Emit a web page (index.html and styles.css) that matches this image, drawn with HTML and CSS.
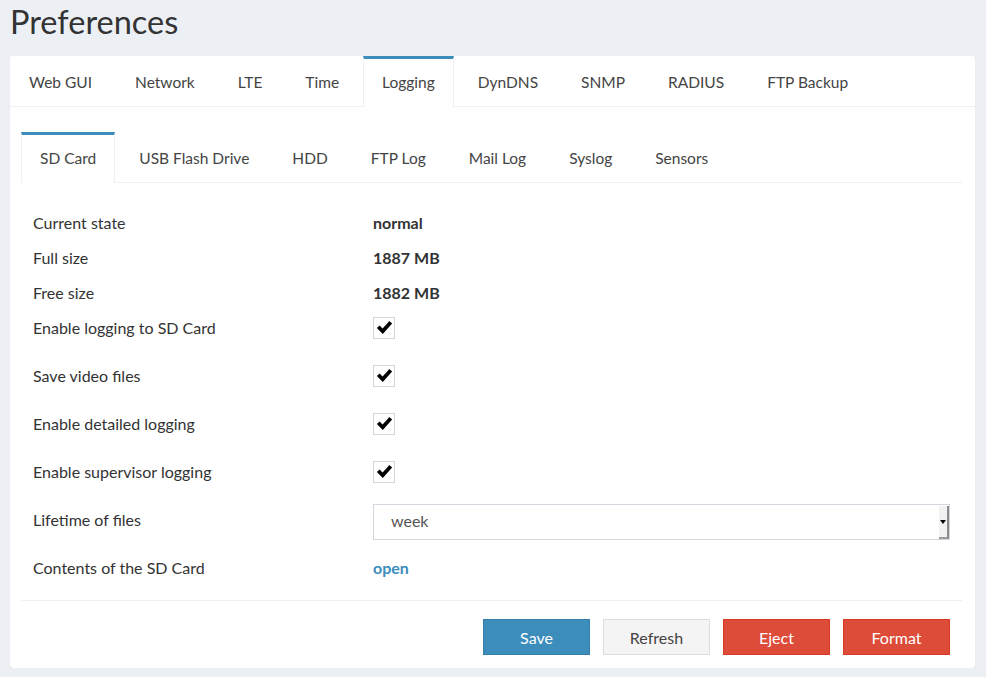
FILE: index.html
```html
<!DOCTYPE html>
<html lang="en">
<head>
    <meta charset="UTF-8">
    <meta name="viewport" content="width=device-width, initial-scale=1.0">
    <title>Preferences</title>
    <link rel="stylesheet" href="styles.css">
</head>
<body>
    <h1 class="page-title">Preferences</h1>

    <div class="card">
        <ul class="tabs main-tabs">
            <li><a>Web GUI</a></li>
            <li><a>Network</a></li>
            <li><a>LTE</a></li>
            <li><a>Time</a></li>
            <li class="active"><a>Logging</a></li>
            <li><a>DynDNS</a></li>
            <li><a>SNMP</a></li>
            <li><a>RADIUS</a></li>
            <li><a>FTP Backup</a></li>
        </ul>

        <div class="tab-content">
            <ul class="tabs sub-tabs">
                <li class="active"><a>SD Card</a></li>
                <li><a>USB Flash Drive</a></li>
                <li><a>HDD</a></li>
                <li><a>FTP Log</a></li>
                <li><a>Mail Log</a></li>
                <li><a>Syslog</a></li>
                <li><a>Sensors</a></li>
            </ul>

            <div class="form">
                <div class="row">
                    <div class="label">Current state</div>
                    <div class="value"><b>normal</b></div>
                </div>
                <div class="row">
                    <div class="label">Full size</div>
                    <div class="value"><b>1887 MB</b></div>
                </div>
                <div class="row">
                    <div class="label">Free size</div>
                    <div class="value"><b>1882 MB</b></div>
                </div>
                <div class="row tall">
                    <div class="label">Enable logging to SD Card</div>
                    <div class="value"><span class="check"><svg viewBox="0 0 16 16" width="17" height="17"><path d="M0.8 8.4 L3.4 6.2 L6.2 9 L12.6 1.8 L15.2 4.2 L6.4 14 Z" fill="#000"/></svg></span></div>
                </div>
                <div class="row tall">
                    <div class="label">Save video files</div>
                    <div class="value"><span class="check"><svg viewBox="0 0 16 16" width="17" height="17"><path d="M0.8 8.4 L3.4 6.2 L6.2 9 L12.6 1.8 L15.2 4.2 L6.4 14 Z" fill="#000"/></svg></span></div>
                </div>
                <div class="row tall">
                    <div class="label">Enable detailed logging</div>
                    <div class="value"><span class="check"><svg viewBox="0 0 16 16" width="17" height="17"><path d="M0.8 8.4 L3.4 6.2 L6.2 9 L12.6 1.8 L15.2 4.2 L6.4 14 Z" fill="#000"/></svg></span></div>
                </div>
                <div class="row tall">
                    <div class="label">Enable supervisor logging</div>
                    <div class="value"><span class="check"><svg viewBox="0 0 16 16" width="17" height="17"><path d="M0.8 8.4 L3.4 6.2 L6.2 9 L12.6 1.8 L15.2 4.2 L6.4 14 Z" fill="#000"/></svg></span></div>
                </div>
                <div class="row tall">
                    <div class="label">Lifetime of files</div>
                    <div class="value">
                        <div class="select">
                            <span class="select-text">week</span>
                            <span class="select-arrow"></span>
                        </div>
                    </div>
                </div>
                <div class="row">
                    <div class="label">Contents of the SD Card</div>
                    <div class="value"><a class="link">open</a></div>
                </div>
            </div>

            <div class="footer">
                <button class="btn btn-primary">Save</button>
                <button class="btn btn-default">Refresh</button>
                <button class="btn btn-danger">Eject</button>
                <button class="btn btn-danger">Format</button>
            </div>
        </div>
    </div>
</body>
</html>
```

FILE: styles.css
```css
body {
    margin: 0;
    padding: 0 11px 0 10px;
    background-color: #ecf0f5;
    font-family: Lato, 'Open Sans', sans-serif;
    font-size: 16px;
    color: #333;
}

.page-title {
    margin: 0;
    height: 56px;
    line-height: 43px;
    font-size: 32.5px;
    font-weight: normal;
    color: #333;
}

.card {
    background-color: #fff;
    border-radius: 3px;
    box-shadow: 0 1px 1px rgba(0,0,0,0.1);
    padding-bottom: 13px;
}

/* tabs */
.tabs {
    display: flex;
    list-style: none;
    margin: 0;
    padding: 0;
    border-bottom: 1px solid #f0f0f0;
}

.tabs li {
    border-top: 3px solid transparent;
    border-left: 1px solid transparent;
    border-right: 1px solid transparent;
    margin-right: 5px;
    margin-bottom: -1px;
}

.tabs li a {
    display: block;
    padding: 13px 18px 14px;
    line-height: 21px;
    font-size: 15.5px;
    color: #444;
    cursor: pointer;
}

.tabs li.active {
    border-top-color: #3c8dbc;
    border-left-color: #f0f0f0;
    border-right-color: #f0f0f0;
    background-color: #fff;
}

.tab-content {
    padding: 25px 13px 0 11px;
}

/* form */
.form {
    padding: 22px 12px 15px;
    border-bottom: 1px solid #f0f0f0;
}

.row {
    display: flex;
    align-items: center;
    height: 35px;
}

.row.tall {
    margin-bottom: 13px;
}

.label {
    width: 340px;
    flex-shrink: 0;
}

.value {
    flex: 1;
}

.value b {
    font-weight: bold;
}

.check {
    display: flex;
    align-items: center;
    justify-content: center;
    width: 20px;
    height: 20px;
    border: 1px solid #d2d6de;
}

.select {
    display: flex;
    height: 34px;
    margin-top: 5px;
    border: 1px solid #d2d6de;
    color: #555;
}

.select-text {
    flex: 1;
    padding-left: 17px;
    line-height: 31px;
}

.select-arrow {
    width: 8px;
    margin-top: 1px;
    background-color: #f2f2f2;
    border-right: 2px solid #8a8a8a;
    border-bottom: 2px solid #9a9a9a;
    position: relative;
}

.select-arrow::after {
    content: '';
    position: absolute;
    left: 1px;
    top: 14px;
    border-left: 3px solid transparent;
    border-right: 3px solid transparent;
    border-top: 4px solid #000;
}

.link {
    color: #3c8dbc;
    font-weight: bold;
    cursor: pointer;
}

/* buttons */
.footer {
    display: flex;
    justify-content: flex-end;
    gap: 13px;
    padding: 18px 12px 0;
}

.btn {
    width: 107px;
    height: 36px;
    font-family: inherit;
    font-size: 16px;
    border: 1px solid transparent;
    border-radius: 0;
    cursor: pointer;
}

.btn-primary {
    background-color: #3c8dbc;
    border-color: #367fa9;
    color: #fff;
}

.btn-default {
    background-color: #f4f4f4;
    border-color: #ddd;
    color: #444;
}

.btn-danger {
    background-color: #dd4b39;
    border-color: #d73925;
    color: #fff;
}
```
